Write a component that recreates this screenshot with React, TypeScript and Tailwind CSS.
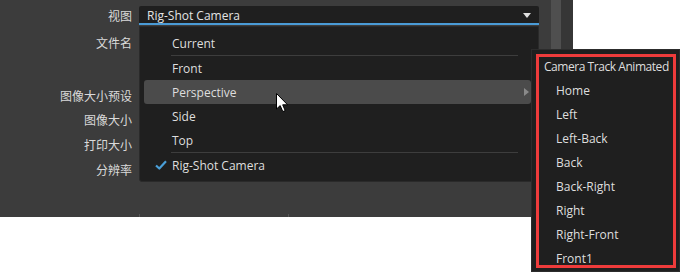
import React from 'react';

const FONT = { fontFamily: '"Open Sans", "Noto Sans CJK SC", sans-serif' };

const labels = [
  { text: '视图', mt: 'mt-[7px]' },
  { text: '文件名', mt: 'mt-[7px]' },
  { text: '图像大小预设', mt: 'mt-[33px]' },
  { text: '图像大小', mt: 'mt-[4px]' },
  { text: '打印大小', mt: 'mt-[5px]' },
  { text: '分辨率', mt: 'mt-[5px]' },
];

const subItems = ['Home', 'Left', 'Left-Back', 'Back', 'Back-Right', 'Right', 'Right-Front', 'Front1'];

const Check = () => (
  <svg width="12" height="10" viewBox="0 0 12 10" className="absolute left-[11px] top-[7px]">
    <path d="M1 5.5 L4.3 8.5 L11 1.2" fill="none" stroke="#4a9fd8" strokeWidth="2.2" strokeLinejoin="round" />
  </svg>
);

const MenuRow: React.FC<{ label: string; active?: boolean; checked?: boolean; arrow?: boolean }> = ({ label, active, checked, arrow }) => (
  <div className={`relative h-6 flex items-center pl-[28px] rounded-[3px] ${active ? 'bg-[#4b4b4b]' : ''}`}>
    {checked && <Check />}
    <span className="text-[12px] text-[#dedede] translate-y-[1px]">{label}</span>
    {arrow && (
      <svg width="5" height="8" viewBox="0 0 5 8" className="absolute right-[2px] top-[8px]">
        <path d="M0 0 L5 4 L0 8 Z" fill="#8a8a8a" />
      </svg>
    )}
  </div>
);

const Separator = () => <div className="h-px bg-[#3d3d3d] ml-[27px] mr-[13px]" />;

export default function App() {
  return (
    <div className="relative w-[680px] h-[272px] bg-white overflow-hidden" style={FONT}>
      {/* dialog panel */}
      <div className="flex w-[573px] h-[217px] bg-[#3c3c3c]">
        <div className="flex-1 flex flex-col">
          <div className="flex flex-1">
            <div className="w-[132px] flex flex-col items-end">
              {labels.map(l => (
                <div key={l.text} className={`${l.mt} h-5 leading-5 text-[12px] text-[#dadada]`}>
                  {l.text}
                </div>
              ))}
            </div>
            <div className="ml-[7px] w-[400px] pt-[6px]">
              <div className="relative h-[19px] bg-[#1f1f1f] rounded-t-[2px] border-b-2 border-[#4a9bd6] flex items-center pl-2">
                <span className="text-[12px] text-[#e4e4e4] leading-none translate-y-[1px]">Rig-Shot Camera</span>
                <svg width="8" height="5" viewBox="0 0 8 5" className="absolute right-[8px] top-[7px]">
                  <path d="M0 0 L8 0 L4 5 Z" fill="#e0e0e0" />
                </svg>
              </div>
            </div>
          </div>
          <div className="flex h-[3px]">
            <div className="ml-[139px] w-px bg-[#555]" />
            <div className="ml-[148px] w-px bg-[#555]" />
          </div>
        </div>
        <div className="w-[10px] bg-[#4f4f4f]" />
        <div className="w-[12px] bg-[#363636]" />
      </div>

      {/* dropdown list */}
      <div className="absolute left-[139px] top-[26px] w-[400px] h-[156px] bg-[#1f1f1f] border border-[#2a2a2a] rounded-b-[3px] pt-[4px] pl-[4px] pr-[7px]">
        <MenuRow label="Current" />
        <Separator />
        <MenuRow label="Front" />
        <MenuRow label="Perspective" active arrow />
        <MenuRow label="Side" />
        <MenuRow label="Top" />
        <Separator />
        <MenuRow label="Rig-Shot Camera" checked />
      </div>

      {/* submenu */}
      <div className="absolute left-[531px] top-[49px] w-[149px] h-[223px] bg-[#1f1f1f] border border-[#2c2c2c] pt-[4px]">
        <div className="h-6 flex items-center pl-[12px] text-[12px] text-[#dedede] tracking-[-0.45px] whitespace-nowrap translate-y-[1px]">Camera Track Animated</div>
        {subItems.map(s => (
          <div key={s} className="h-6 flex items-center pl-[24px] text-[12px] text-[#dedede] translate-y-[1px]">{s}</div>
        ))}
        <div className="absolute left-[4px] top-[4px] w-[140px] h-[214px] border-[3px] border-[#ee3b3b]" />
      </div>

      {/* mouse cursor */}
      <svg width="13" height="20" viewBox="0 0 13 20" className="absolute left-[276px] top-[93px]">
        <path d="M0.5 0.5 L0.5 16 L4.2 12.6 L6.8 18.6 L9.2 17.6 L6.7 11.8 L11.6 11.8 Z" fill="#ffffff" stroke="#000000" strokeWidth="1" strokeLinejoin="round" />
      </svg>
    </div>
  );
}
